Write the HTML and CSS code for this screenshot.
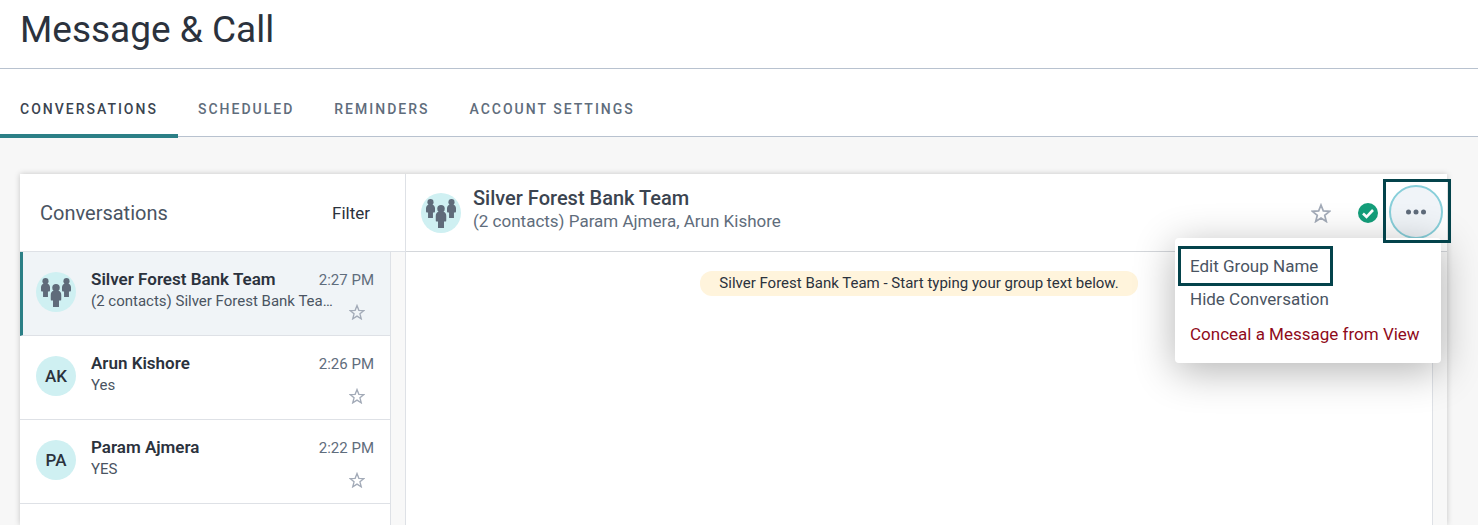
FILE: index.html
```html
<!DOCTYPE html>
<html lang="en">
  <head>
    <meta charset="UTF-8" />
    <meta name="viewport" content="width=device-width, initial-scale=1.0" />
    <title>Message &amp; Call</title>
    <link rel="stylesheet" href="styles.css">
  </head>
  <body>
    <!-- shared icon shapes -->
    <svg class="sprite" aria-hidden="true">
      <symbol id="person" viewBox="0 0 22 46">
        <circle cx="11" cy="7.5" r="7.5" />
        <path d="M7 13h8q6 1 7 9v8q0 3-2 3h-3v13H5V33H2q-2 0-2-3v-8q1-8 7-9z" />
      </symbol>
      <symbol id="group" viewBox="0 0 40 40">
        <use href="#person" x="5" y="6" width="9" height="19" />
        <use href="#person" x="26" y="6" width="9" height="19" />
        <use href="#person" x="14.5" y="12" width="11" height="23" />
      </symbol>
      <symbol id="star" viewBox="0 0 20 20">
        <path d="M10 2l2.3 5.9 6.3.4-4.9 4 1.6 6.2-5.3-3.4-5.3 3.4 1.6-6.2-4.9-4 6.3-.4z" fill="none" stroke="currentColor" stroke-width="1.7" />
      </symbol>
    </svg>

    <header class="page-header">
      <h1>Message &amp; Call</h1>
    </header>

    <nav class="tabs">
      <a href="#" class="tab active">CONVERSATIONS</a>
      <a href="#" class="tab">SCHEDULED</a>
      <a href="#" class="tab">REMINDERS</a>
      <a href="#" class="tab">ACCOUNT SETTINGS</a>
    </nav>

    <main class="content">
      <div class="panel">
        <section class="sidebar">
          <div class="sidebar-header">
            <h2>Conversations</h2>
            <button class="filter">Filter</button>
          </div>
          <div class="list">
            <div class="conversation selected">
              <div class="avatar"><svg><use href="#group" /></svg></div>
              <div class="info">
                <div class="name">Silver Forest Bank Team</div>
                <div class="preview">(2 contacts) Silver Forest Bank Tea…</div>
              </div>
              <div class="meta">
                <span class="time">2:27 PM</span>
                <button class="star" aria-label="Star"><svg><use href="#star" /></svg></button>
              </div>
            </div>
            <div class="conversation">
              <div class="avatar">AK</div>
              <div class="info">
                <div class="name">Arun Kishore</div>
                <div class="preview">Yes</div>
              </div>
              <div class="meta">
                <span class="time">2:26 PM</span>
                <button class="star" aria-label="Star"><svg><use href="#star" /></svg></button>
              </div>
            </div>
            <div class="conversation">
              <div class="avatar">PA</div>
              <div class="info">
                <div class="name">Param Ajmera</div>
                <div class="preview">YES</div>
              </div>
              <div class="meta">
                <span class="time">2:22 PM</span>
                <button class="star" aria-label="Star"><svg><use href="#star" /></svg></button>
              </div>
            </div>
          </div>
        </section>

        <section class="chat">
          <div class="chat-header">
            <div class="avatar"><svg><use href="#group" /></svg></div>
            <div class="chat-title">
              <h3>Silver Forest Bank Team</h3>
              <p>(2 contacts) Param Ajmera, Arun Kishore</p>
            </div>
            <div class="actions">
              <button class="star star-big" aria-label="Star"><svg><use href="#star" /></svg></button>
              <button class="done" aria-label="Mark as done">
                <svg viewBox="0 0 20 20">
                  <circle cx="10" cy="10" r="10" fill="#149e7a" />
                  <path d="M5 10.5l3.5 3.3L15 7" fill="none" stroke="#fff" stroke-width="2.6" />
                </svg>
              </button>
              <div class="more-box">
                <button class="more" aria-label="More options">
                  <svg viewBox="0 0 20 6">
                    <circle cx="2.5" cy="3" r="2.5" />
                    <circle cx="10" cy="3" r="2.5" />
                    <circle cx="17.5" cy="3" r="2.5" />
                  </svg>
                </button>
              </div>
              <div class="menu">
                <button class="highlight">Edit Group Name</button>
                <button>Hide Conversation</button>
                <button class="danger">Conceal a Message from View</button>
              </div>
            </div>
          </div>
          <div class="messages">
            <p class="notice">Silver Forest Bank Team - Start typing your group text below.</p>
          </div>
        </section>
      </div>
    </main>
  </body>
</html>
```

FILE: styles.css
```css
* {
  box-sizing: border-box;
}

body {
  margin: 0;
  min-height: 100vh;
  display: flex;
  flex-direction: column;
  font-family: Roboto, sans-serif;
  color: #2b323d;
  background-color: #fff;
}

h1,
h2,
h3,
p {
  margin: 0;
  font-weight: 400;
}

button {
  padding: 0;
  border: none;
  background: none;
  font-family: inherit;
  color: inherit;
  cursor: pointer;
}

svg {
  display: block;
}

.sprite {
  position: absolute;
  width: 0;
  height: 0;
}

.page-header {
  padding: 8px 20px 16px;
  border-bottom: 1px solid #b8c2cf;
}

h1 {
  font-size: 37px;
  line-height: 44px;
}

.tabs {
  position: relative;
  z-index: 1;
  display: flex;
  height: 68px;
  border-bottom: 1px solid #b8c2cf;
}

.tab {
  height: 69px;
  padding: 12px 20px 0;
  font-size: 14px;
  line-height: 56px;
  font-weight: 500;
  letter-spacing: 2px;
  color: #5f6d7c;
  text-decoration: none;
}

.tab.active {
  color: #3b4450;
  border-bottom: 4px solid #2b7f86;
}

.content {
  flex: 1;
  display: flex;
  padding: 37px 31px 0 20px;
  background-color: #f7f7f7;
}

.panel {
  flex: 1;
  display: flex;
  background-color: #fff;
  box-shadow: 0 0 6px rgba(0, 0, 0, 0.2);
}

.sidebar {
  width: 386px;
  display: flex;
  flex-direction: column;
  border-right: 1px solid #dee1e6;
}

.sidebar-header {
  height: 78px;
  padding: 0 35px 0 20px;
  display: flex;
  align-items: center;
  justify-content: space-between;
  border-bottom: 1px solid #dee1e6;
}

h2 {
  font-size: 20px;
  color: #4a5462;
}

.filter {
  font-size: 17px;
}

.list {
  flex: 1;
  padding-right: 14px;
  background: linear-gradient(to right, #fff 370px, #dee1e6 370px, #dee1e6 371px, #f8f8f8 371px);
}

.conversation {
  display: flex;
  height: 84px;
  padding: 16px 16px 0 16px;
  margin-right: 1px;
  border-bottom: 1px solid #dee1e6;
}

.conversation.selected {
  padding-left: 13px;
  border-left: 3px solid #2b7f86;
  background-color: #f0f4f7;
}

.avatar {
  flex: none;
  display: flex;
  align-items: center;
  justify-content: center;
  width: 40px;
  height: 40px;
  border-radius: 50%;
  background-color: #cff0f2;
  font-size: 17px;
  font-weight: 500;
}

.conversation .avatar {
  margin-top: 4px;
}

.avatar svg {
  width: 40px;
  height: 40px;
  fill: #5f6b7a;
}

.info {
  flex: 1;
  min-width: 0;
  padding-left: 15px;
}

.name {
  font-size: 17px;
  line-height: 22px;
  font-weight: 600;
  white-space: nowrap;
}

.preview {
  font-size: 15px;
  line-height: 22px;
  color: #4a5462;
  white-space: nowrap;
}

.meta {
  display: flex;
  flex-direction: column;
  align-items: flex-end;
}

.time {
  font-size: 15px;
  line-height: 24px;
  color: #5f6d7c;
}

.star {
  margin: 12px 9px 0 0;
  color: #a3abb8;
}

.star svg {
  width: 16px;
  height: 16px;
}

.chat {
  flex: 1;
  display: flex;
  flex-direction: column;
  background-color: #f8f8f8;
}

.chat-header {
  height: 78px;
  padding-left: 15px;
  display: flex;
  align-items: center;
  background-color: #fff;
  border-bottom: 1px solid #d4d7db;
}

.chat-title {
  flex: 1;
  padding: 0 0 7px 12px;
}

h3 {
  font-size: 20px;
  line-height: 24px;
  font-weight: 500;
  color: #3b4450;
}

.chat-title p {
  font-size: 17px;
  line-height: 22px;
  color: #5f6d7c;
}

.actions {
  position: relative;
  display: flex;
  align-items: center;
}

.star-big {
  margin: 0 27px 0 0;
}

.star-big svg,
.done svg {
  width: 20px;
  height: 20px;
}

.more-box {
  position: relative;
  margin: 0 -4px 3px 5px;
  padding: 6px 8px 4px 6px;
}

/* teal boxes call out the menu button and the first menu item */
.more-box::after {
  content: "";
  position: absolute;
  z-index: 2;
  inset: 0;
  border: 3px solid #04434b;
  pointer-events: none;
}

.more {
  display: flex;
  align-items: center;
  justify-content: center;
  width: 54px;
  height: 54px;
  border: 2px solid #88cfda;
  border-radius: 50%;
  background-color: #f0f4f8;
}

.more svg {
  width: 20px;
  height: 6px;
  fill: #5f6b7a;
}

.menu {
  position: absolute;
  z-index: 1;
  top: 59px;
  right: 6px;
  width: 266px;
  padding: 8px 3px 11px;
  background-color: #fff;
  border-radius: 4px;
  box-shadow: 0 8px 40px rgba(0, 0, 0, 0.3);
}

.menu button {
  display: block;
  padding: 0 12px;
  font-size: 17px;
  line-height: 35px;
  color: #4a5462;
  white-space: nowrap;
}

.menu .highlight {
  margin-bottom: -4px;
  padding: 0 12px 0 9px;
  border: 3px solid #04434b;
  line-height: 34px;
}

.menu .danger {
  color: #8f0a1a;
}

.messages {
  flex: 1;
  margin-right: 14px;
  padding-top: 19px;
  background-color: #fff;
  border-right: 1px solid #dee1e6;
  text-align: center;
}

.notice {
  display: inline-block;
  padding: 0 19px;
  border-radius: 12px;
  font-size: 15px;
  line-height: 25px;
  background-color: #fff4dc;
}
```
